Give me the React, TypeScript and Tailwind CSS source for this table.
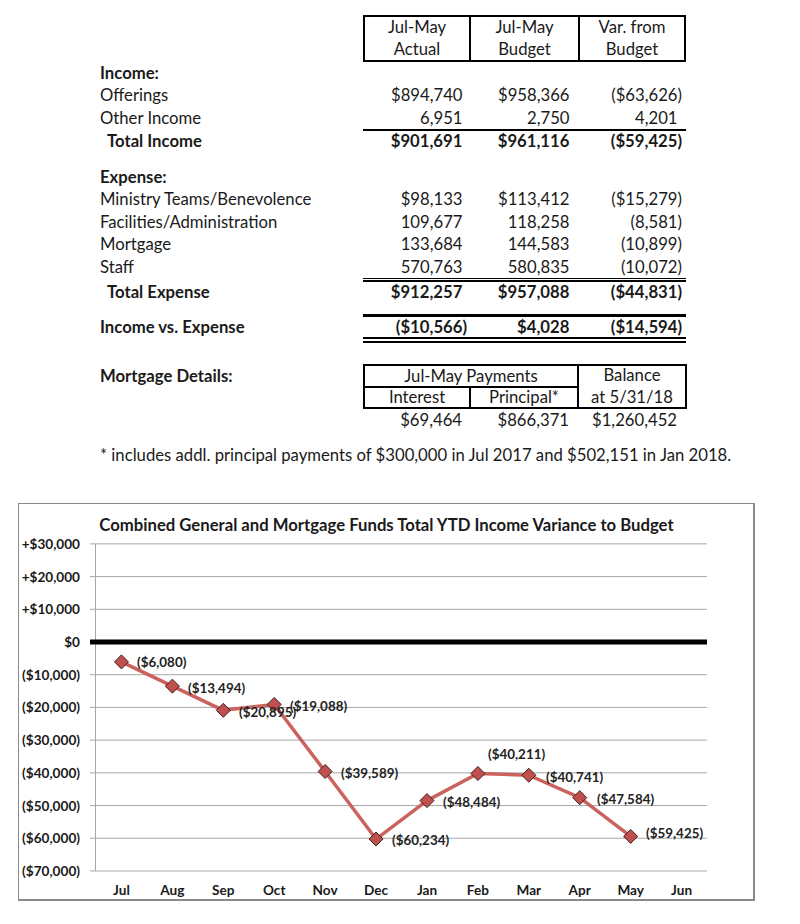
const P = () => <span className="invisible">)</span>;

function Num({ v, bold }: { v: string; bold?: boolean }) {
  const neg = v.endsWith(")");
  return (
    <div className={`text-right pr-[4px] ${bold ? "font-bold" : ""}`}>
      {v}
      {!neg && <P />}
    </div>
  );
}

function Row({ label, vals, bold, indent, h }: { label: string; vals?: string[]; bold?: boolean; indent?: boolean; h: string }) {
  return (
    <div className={`grid grid-cols-[263px_108px_107px_108px] items-center ${h}`}>
      <div className={`whitespace-nowrap ${bold ? "font-bold" : ""} ${indent ? "pl-[7px]" : ""}`}>{label}</div>
      {vals ? vals.map((v, i) => <Num key={i} v={v} bold={bold} />) : null}
    </div>
  );
}

const months = ["Jul", "Aug", "Sep", "Oct", "Nov", "Dec", "Jan", "Feb", "Mar", "Apr", "May", "Jun"];
const data = [-6080, -13494, -20895, -19088, -39589, -60234, -48484, -40211, -40741, -47584, -59425];
const labels: [string, number, number][] = [
  ["($6,080)", 137, 662],
  ["($13,494)", 188, 688],
  ["($20,895)", 239, 712],
  ["($19,088)", 290, 706],
  ["($39,589)", 341, 773],
  ["($60,234)", 392, 840],
  ["($48,484)", 443, 802],
  ["($40,211)", 488, 754],
  ["($40,741)", 546, 777],
  ["($47,584)", 597, 799],
  ["($59,425)", 646, 833],
];
const yOf = (v: number) => 642 - (v / 10000) * 32.71;
const xOf = (i: number) => 96 + 50.92 * (i + 0.5);
const ticks = [30000, 20000, 10000, 0, -10000, -20000, -30000, -40000, -50000, -60000, -70000];
const tickLabel = (v: number) =>
  v > 0 ? `+$${(v / 1000).toFixed(0)},000` : v === 0 ? "$0" : `($${(-v / 1000).toFixed(0)},000)`;

function Chart() {
  const pts = data.map((v, i) => `${xOf(i)},${yOf(v)}`).join(" ");
  return (
    <div className="ml-[18px] w-[737px] h-[398px] border border-[#8a8a8a] border-r-2 border-b-2">
      <svg width="734" height="395" viewBox="19 504 734 395" className="block">
        <text x="386.5" y="525" textAnchor="middle" dominantBaseline="central" fontWeight="700" fontSize="16.7" fill="#1a1a1a">
          Combined General and Mortgage Funds Total YTD Income Variance to Budget
        </text>
        {ticks.map((t) => (
          <g key={t}>
            {t !== 0 && <line x1="90" x2="707" y1={yOf(t)} y2={yOf(t)} stroke="#a6a6a6" strokeWidth="1" />}
            <text x="80" y={yOf(t)} textAnchor="end" dominantBaseline="central" fontWeight="700" fontSize="13.6" fill="#1a1a1a">
              {tickLabel(t)}
            </text>
          </g>
        ))}
        <line x1="95.5" x2="95.5" y1="544" y2="871" stroke="#a6a6a6" strokeWidth="1" />
        <line x1="90" x2="707" y1="642" y2="642" stroke="#000" strokeWidth="5" />
        {months.map((m, i) => (
          <text key={m} x={xOf(i)} y="890" textAnchor="middle" dominantBaseline="central" fontWeight="700" fontSize="13.6" fill="#1a1a1a">
            {m}
          </text>
        ))}
        <polyline points={pts} fill="none" stroke="#cb625e" strokeWidth="3.5" strokeLinejoin="round" />
        {data.map((v, i) => {
          const x = xOf(i);
          const y = yOf(v);
          return (
            <polygon key={i} points={`${x},${y - 7} ${x + 7},${y} ${x},${y + 7} ${x - 7},${y}`} fill="#c0504d" stroke="#3d2020" strokeWidth="1" />
          );
        })}
        {labels.map(([t, x, y], i) => (
          <text key={i} x={x} y={y} dominantBaseline="central" fontWeight="700" fontSize="13.4" fill="#222">
            {t}
          </text>
        ))}
      </svg>
    </div>
  );
}

export default function App() {
  return (
    <div className="w-[800px] h-[924px] bg-white text-[#1a1a1a] [font-family:Lato,sans-serif] text-[16.7px] leading-none">
      <div className="pl-[100px] pt-[15px]">
        <div className="grid grid-cols-[263px_108px_107px_108px]">
          <div />
          <div className="h-[47px] border-2 border-black flex flex-col justify-center items-center leading-[21.5px]">
            <div>Jul-May</div>
            <div>Actual</div>
          </div>
          <div className="h-[47px] border-y-2 border-black flex flex-col justify-center items-center leading-[21.5px]">
            <div>Jul-May</div>
            <div>Budget</div>
          </div>
          <div className="h-[47px] border-2 border-black flex flex-col justify-center items-center leading-[21.5px]">
            <div>Var. from</div>
            <div>Budget</div>
          </div>
        </div>
        <Row label="Income:" bold h="h-[22px]" />
        <Row label="Offerings" vals={["$894,740", "$958,366", "($63,626)"]} h="h-[23px]" />
        <Row label="Other Income" vals={["6,951", "2,750", "4,201"]} h="h-[22px]" />
        <div className="ml-[263px] w-[323px] h-[2px] bg-black" />
        <Row label="Total Income" vals={["$901,691", "$961,116", "($59,425)"]} bold indent h="h-[21px]" />
        <div className="h-[14px]" />
        <Row label="Expense:" bold h="h-[22px]" />
        <Row label="Ministry Teams/Benevolence" vals={["$98,133", "$113,412", "($15,279)"]} h="h-[23px]" />
        <Row label="Facilities/Administration" vals={["109,677", "118,258", "(8,581)"]} h="h-[22px]" />
        <Row label="Mortgage" vals={["133,684", "144,583", "(10,899)"]} h="h-[23px]" />
        <Row label="Staff" vals={["570,763", "580,835", "(10,072)"]} h="h-[22px]" />
        <div className="ml-[263px] w-[323px] h-[1px] bg-black" />
        <div className="ml-[263px] w-[323px] h-[2px] bg-black mt-[1px]" />
        <Row label="Total Expense" vals={["$912,257", "$957,088", "($44,831)"]} bold indent h="h-[20px]" />
        <div className="h-[12px]" />
        <div className="ml-[263px] w-[323px] h-[3px] bg-black" />
        <Row label="Income vs. Expense" vals={["($10,566)", "$4,028", "($14,594)"]} bold h="h-[20px]" />
        <div className="ml-[263px] w-[323px] h-[6px] border-y-2 border-black" />
        <div className="h-[21px]" />
        <div className="grid grid-cols-[263px_324px] items-start">
          <div className="font-bold h-[24px] flex items-center pt-[1px]">Mortgage Details:</div>
          <div className="h-[45px] border-2 border-black flex">
            <div className="w-[214px] border-r-2 border-black flex flex-col">
              <div className="h-[20px] border-b-2 border-black box-content flex items-center justify-center">Jul-May Payments</div>
              <div className="flex h-[19px]">
                <div className="w-[106px] border-r-2 border-black flex items-center justify-center">Interest</div>
                <div className="flex-1 flex items-center justify-center">Principal*</div>
              </div>
            </div>
            <div className="flex-1 flex flex-col items-center justify-center leading-[21.5px]">
              <div>Balance</div>
              <div>at 5/31/18</div>
            </div>
          </div>
        </div>
        <div className="grid grid-cols-[263px_108px_106px_110px] items-center h-[23px]">
          <div />
          <div className="text-right pr-[9px]">$69,464</div>
          <div className="text-right pr-[8px]">$866,371</div>
          <div className="text-right pr-[10px]">$1,260,452</div>
        </div>
        <div className="h-[12px]" />
        <div className="h-[22px] flex items-center whitespace-nowrap">
          * includes addl. principal payments of $300,000 in Jul 2017 and $502,151 in Jan 2018.
        </div>
      </div>
      <div className="h-[37px]" />
      <Chart />
    </div>
  );
}
